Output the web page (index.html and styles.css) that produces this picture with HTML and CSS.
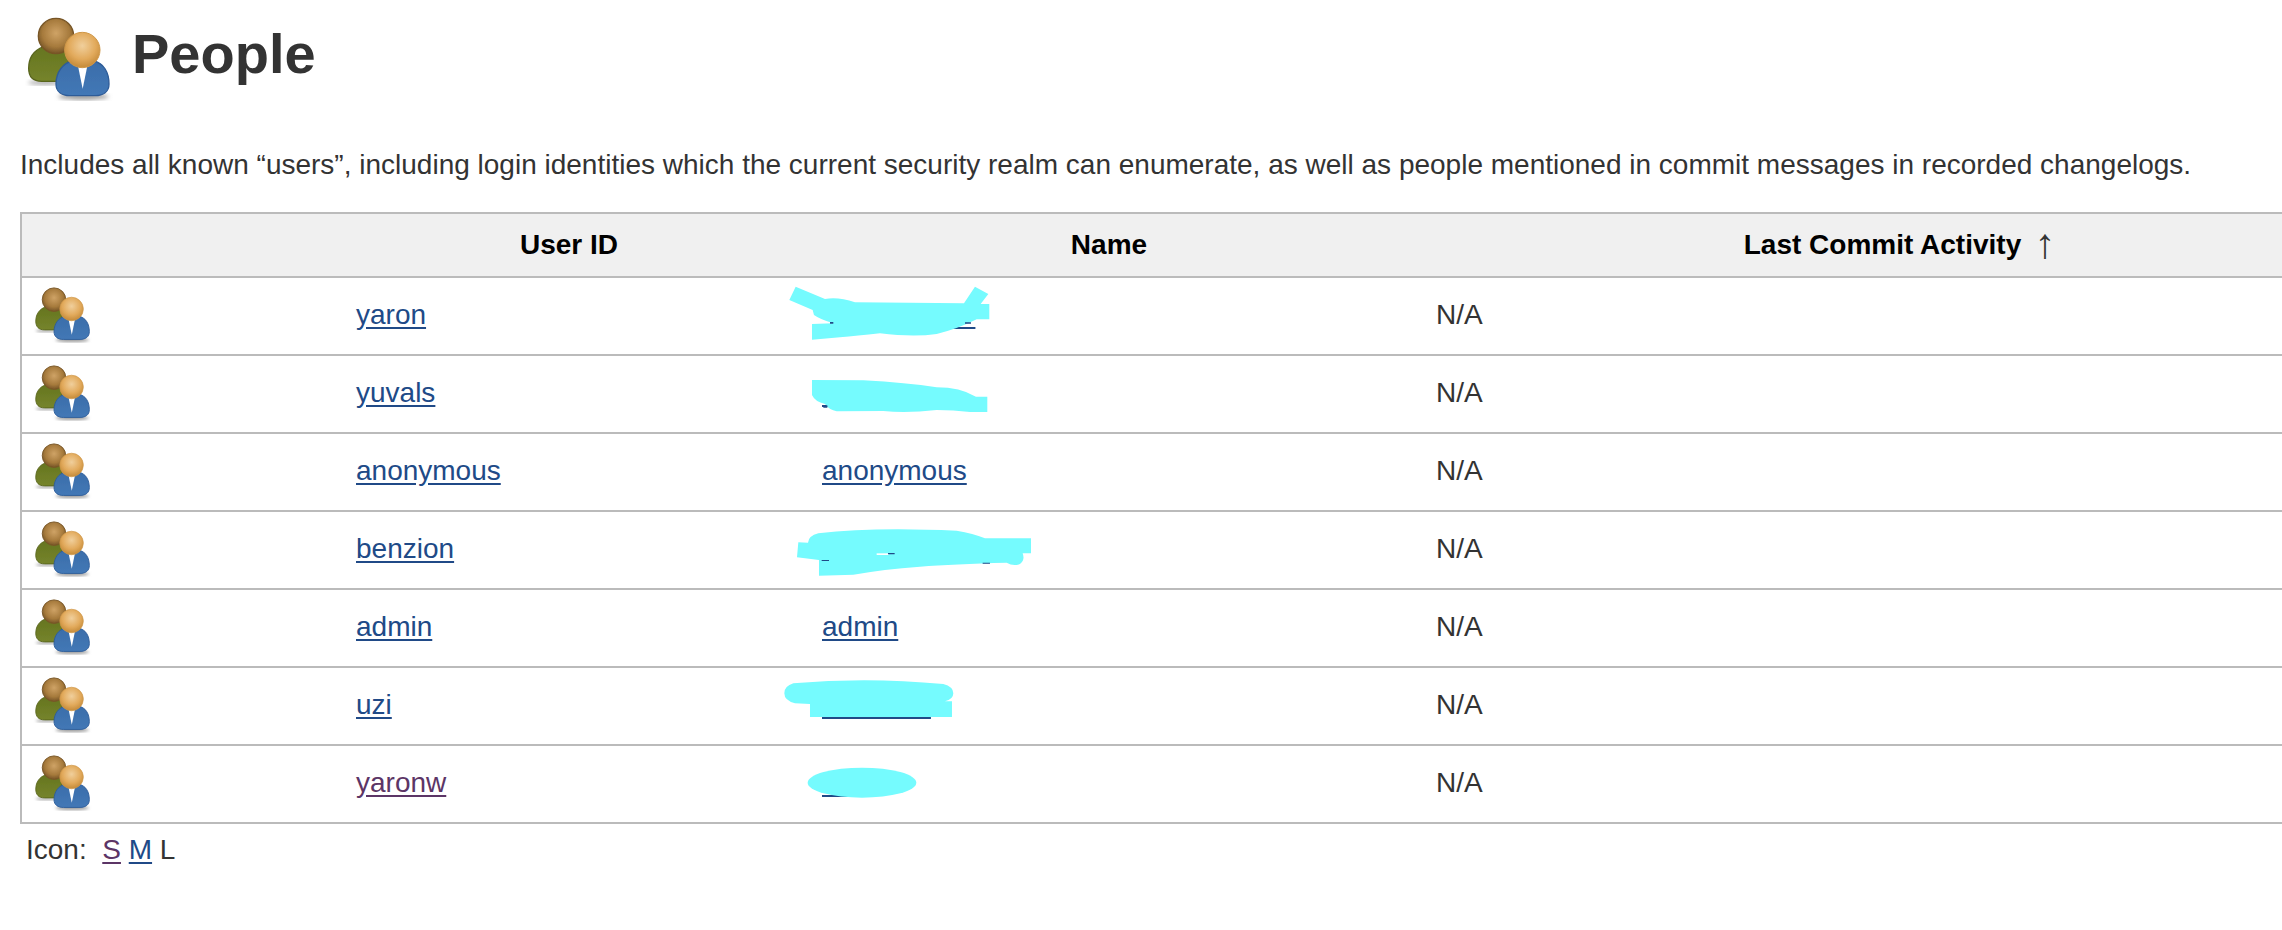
FILE: index.html
```html
<!DOCTYPE html>
<html>
	<head>
	<meta charset="utf-8">
	<title>People</title>
	<link rel="stylesheet" href="styles.css">
	</head>
	<body>
		<svg class="defs" width="0" height="0">
			<defs>
				<radialGradient id="headBack" cx="50%" cy="42%" r="55%">
					<stop offset="0" stop-color="#cfa366"/>
					<stop offset="0.7" stop-color="#a67a3c"/>
					<stop offset="1" stop-color="#7d5a2a"/>
				</radialGradient>
				<radialGradient id="headFront" cx="50%" cy="38%" r="58%">
					<stop offset="0" stop-color="#f0cf9c"/>
					<stop offset="0.65" stop-color="#e2aa5c"/>
					<stop offset="1" stop-color="#c98f3e"/>
				</radialGradient>
				<linearGradient id="bodyBack" x1="0" y1="0" x2="0" y2="1">
					<stop offset="0" stop-color="#66751f"/>
					<stop offset="1" stop-color="#75842c"/>
				</linearGradient>
				<linearGradient id="bodyFront" x1="0" y1="0" x2="0" y2="1">
					<stop offset="0" stop-color="#3a6daa"/>
					<stop offset="1" stop-color="#4378b6"/>
				</linearGradient>
				<filter id="soft"><feGaussianBlur stdDeviation="7"/></filter>
				<filter id="edge"><feGaussianBlur stdDeviation="1.5"/></filter>
				<symbol id="people" viewBox="60 33 288 288">
					<ellipse cx="250" cy="290" rx="76" ry="9" fill="#999" filter="url(#soft)"/>
					<ellipse cx="135" cy="248" rx="50" ry="7" fill="#aaa" filter="url(#soft)"/>
					<g filter="url(#edge)">
						<path d="M86 205 C86 170 105 150 130 140 L205 140 L205 244 L125 244 C100 244 86 230 86 205Z" fill="url(#bodyBack)" stroke="#59651e" stroke-width="4"/>
						<circle cx="168" cy="108" r="53" fill="url(#headBack)" stroke="#775525" stroke-width="4"/>
						<path d="M168 252 C168 215 190 190 215 183 L282 183 C310 190 327 215 327 252 C327 275 310 287 285 287 L210 287 C185 287 168 275 168 252Z" fill="url(#bodyFront)" stroke="#2d5b98" stroke-width="4"/>
						<path d="M234 198 L262 198 L248 266Z" fill="#fff"/>
						<circle cx="247" cy="150" r="53" fill="url(#headFront)" stroke="#cf9748" stroke-width="3"/>
					</g>
				</symbol>
			</defs>
		</svg>

		<div class="title">
			<svg class="icon-big"><use href="#people"/></svg>
			<h1>People</h1>
		</div>
		<p class="intro">Includes all known “users”, including login identities which the current security realm can enumerate, as well as people mentioned in commit messages in recorded changelogs.</p>

		<table class="people">
			<colgroup>
				<col class="c-icon"><col class="c-id"><col class="c-name"><col class="c-last">
			</colgroup>
			<thead>
				<tr><th></th><th>User ID</th><th>Name</th><th>Last Commit Activity<span class="arrow">↑</span></th></tr>
			</thead>
			<tbody>
				<tr>
					<td><svg class="icon"><use href="#people"/></svg></td>
					<td><a href="#">yaron</a></td>
					<td><a href="#">&nbsp;&nbsp;&nbsp;&nbsp;&nbsp;&nbsp;&nbsp;&nbsp;&nbsp;&nbsp;&nbsp;&nbsp;&nbsp;&nbsp;&nbsp;&nbsp;&nbsp;&nbsp;&nbsp;&#8201;</a></td>
					<td>N/A</td>
				</tr>
				<tr>
					<td><svg class="icon"><use href="#people"/></svg></td>
					<td><a href="#">yuvals</a></td>
					<td><a href="#">&nbsp;&nbsp;&nbsp;&nbsp;&nbsp;&nbsp;&nbsp;&nbsp;&nbsp;&nbsp;&nbsp;&nbsp;&nbsp;&nbsp;&nbsp;&nbsp;</a></td>
					<td>N/A</td>
				</tr>
				<tr>
					<td><svg class="icon"><use href="#people"/></svg></td>
					<td><a href="#">anonymous</a></td>
					<td><a href="#">anonymous</a></td>
					<td>N/A</td>
				</tr>
				<tr>
					<td><svg class="icon"><use href="#people"/></svg></td>
					<td><a href="#">benzion</a></td>
					<td><a href="#">&nbsp;&nbsp;&nbsp;&nbsp;&nbsp;&nbsp;&nbsp;&nbsp;&nbsp;&nbsp;&nbsp;&nbsp;&nbsp;&nbsp;&nbsp;&nbsp;&nbsp;&nbsp;</a></td>
					<td>N/A</td>
				</tr>
				<tr>
					<td><svg class="icon"><use href="#people"/></svg></td>
					<td><a href="#">admin</a></td>
					<td><a href="#">admin</a></td>
					<td>N/A</td>
				</tr>
				<tr>
					<td><svg class="icon"><use href="#people"/></svg></td>
					<td><a href="#">uzi</a></td>
					<td><a href="#">&nbsp;&nbsp;&nbsp;&nbsp;&nbsp;&nbsp;&nbsp;&nbsp;&nbsp;&nbsp;&nbsp;&nbsp;&nbsp;&nbsp;</a></td>
					<td>N/A</td>
				</tr>
				<tr>
					<td><svg class="icon"><use href="#people"/></svg></td>
					<td><a class="seen" href="#">yaronw</a></td>
					<td><a href="#">&nbsp;&nbsp;&nbsp;&nbsp;&nbsp;</a></td>
					<td>N/A</td>
				</tr>
			</tbody>
		</table>
		<div class="sizes">Icon:&nbsp;&nbsp;<a class="seen" href="#">S</a> <a href="#">M</a> L</div>

		<!-- marker scribbles drawn over the real names -->
		<svg class="scribbles" width="2282" height="930">
			<g transform="translate(740 260) scale(0.3333)">
				<path d="M148 120 L167 80 L255 117 Q295 110 345 127 L672 130 L705 80 L745 102 L722 132 L748 132 L748 178 L710 178 Q650 208 590 222 Q520 232 420 220 Q350 228 300 232 L216 239 L216 192 L280 190 Q240 178 222 165 L218 150Z"/>
				<path d="M216 360 L370 361 Q500 368 590 382 Q660 382 708 410 L742 410 L742 456 L690 456 Q640 450 590 450 Q500 460 430 453 L290 454 Q268 450 255 432 Q225 425 216 405Z"/>
				<path class="peek" d="M270 186h10v5h-10z M675 187h18v4h-18z M250 436h12v7h-12z"/>
			</g>
			<g transform="translate(740 500) scale(0.3333)">
				<path d="M204 128 Q205 108 235 100 Q400 80 650 92 Q700 100 735 115 L873 115 L873 160 L848 160 Q856 180 840 192 Q820 200 800 188 Q640 192 540 200 Q430 208 340 224 L237 227 L237 180 L171 172 L175 127Z"/>
				<path class="gap" d="M410 160h36v5h-36z"/>
				<path class="peek" d="M245 180h22v3h-22z M728 188h22v3h-22z M444 159h20v4h-20z"/>
			</g>
			<g transform="translate(740 660) scale(0.3333)">
				<path d="M160 70 Q380 50 610 72 Q640 80 640 100 Q640 118 615 124 L636 124 L636 171 L210 171 L210 132 L165 130 Q133 122 133 100 Q133 78 160 70Z"/>
				<ellipse cx="366" cy="368" rx="163" ry="45"/>
			</g>
		</svg>
	</body>
</html>
```

FILE: styles.css
```css
html, body {
	margin: 0;
	overflow-x: hidden;
}

body {
	position: relative;
	height: 930px;
	font-family: "Liberation Sans", Arial, sans-serif;
	font-size: 28px;
	line-height: 39px;
	color: #333;
	background-color: #ffffff;
}

a {
	color: #204a87;
	text-underline-offset: 3px;
}

a.seen {
	color: #5c3566;
}

.defs {
	position: absolute;
}

.title {
	display: flex;
	align-items: center;
	gap: 16px;
	padding: 11px 0 0 20px;
}

.icon-big {
	width: 96px;
	height: 96px;
}

h1 {
	margin: 0 0 10px;
	font-size: 56px;
	line-height: 64px;
	font-weight: bold;
	color: #333;
}

.intro {
	margin: 38px 0 28px 20px;
	white-space: nowrap;
}

.people {
	margin-left: 20px;
	width: 2350px;
	table-layout: fixed;
	border-collapse: collapse;
	border: 2px solid #bbb;
}

.c-icon { width: 315px; }
.c-id { width: 466px; }
.c-name { width: 614px; }

.people th {
	height: 60px;
	padding: 0 20px 2px;
	background-color: #f0f0f0;
	color: #000;
	font-weight: bold;
	text-align: center;
	border-bottom: 2px solid #bbb;
}

.arrow {
	margin-left: 13px;
	margin-right: -15px;
	font-size: 42px;
	line-height: 0;
	vertical-align: -4px;
	font-weight: normal;
	color: #333;
}

.people td {
	height: 78px;
	padding: 0 20px 4px;
	border-top: 2px solid #bbb;
	box-sizing: border-box;
}

.people td:first-child {
	vertical-align: top;
	padding: 5px 0 0 8px;
}

.icon {
	display: block;
	width: 64px;
	height: 64px;
}

.sizes {
	padding: 6px 0 0 26px;
}

.scribbles {
	position: absolute;
	top: 0;
	left: 0;
	fill: #75fbfe;
	pointer-events: none;
}

.scribbles .peek {
	fill: #204a87;
}

.scribbles .gap {
	fill: #ffffff;
}
```
